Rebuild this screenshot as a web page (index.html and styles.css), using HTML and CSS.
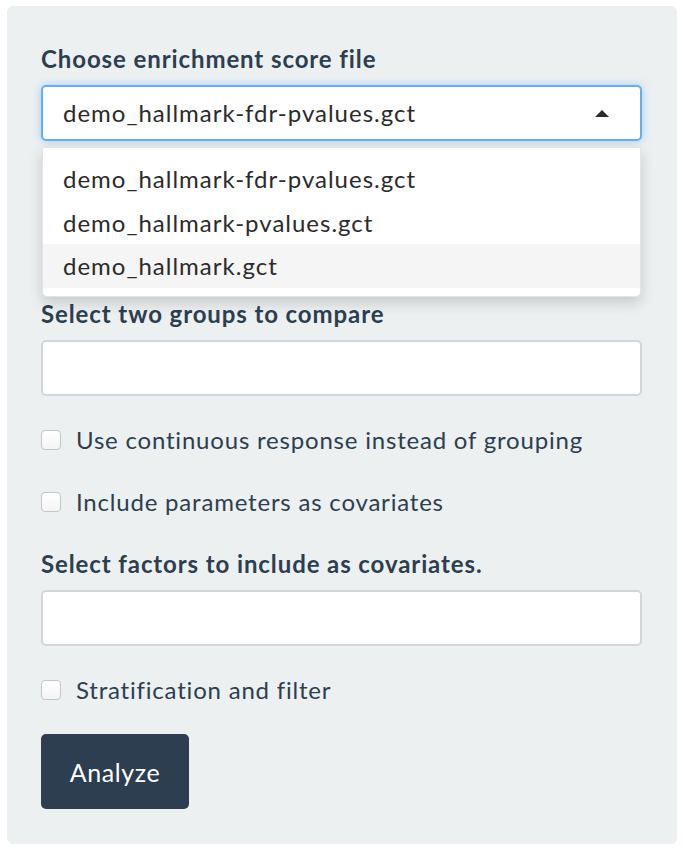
FILE: index.html
```html
<!DOCTYPE html>
<html>
<head>
<meta charset="utf-8">
<link rel="stylesheet" href="styles.css">
</head>
<body>
<div class="well">
  <div class="form-group group-select">
    <label class="control-label">Choose enrichment score file</label>
    <div class="selectize">
      <div class="select-input">
        <span class="select-value">demo_hallmark-fdr-pvalues.gct</span>
        <span class="caret-up"></span>
      </div>
      <div class="dropdown">
        <div class="option">demo_hallmark-fdr-pvalues.gct</div>
        <div class="option">demo_hallmark-pvalues.gct</div>
        <div class="option active">demo_hallmark.gct</div>
      </div>
    </div>
  </div>

  <div class="form-group">
    <label class="control-label">Select two groups to compare</label>
    <div class="text-input"></div>
  </div>

  <label class="checkbox"><input type="checkbox"><span>Use continuous response instead of grouping</span></label>
  <label class="checkbox"><input type="checkbox"><span>Include parameters as covariates</span></label>

  <div class="form-group">
    <label class="control-label">Select factors to include as covariates.</label>
    <div class="text-input"></div>
  </div>

  <label class="checkbox"><input type="checkbox"><span>Stratification and filter</span></label>

  <button class="btn">Analyze</button>
</div>
</body>
</html>
```

FILE: styles.css
```css
* { box-sizing: border-box; }
html, body { margin: 0; padding: 0; background: #ffffff; }
body {
  font-family: Lato, "Open Sans", sans-serif;
  color: #2c3e50;
  font-size: 24px;
  letter-spacing: 0.9px;
}
.well {
  margin: 6px 7px 6px 7px;
  width: 670px;
  background: #ecf0f1;
  border-radius: 6px;
  padding: 37px 35px 35px 34px;
  display: flex;
  flex-direction: column;
  align-items: flex-start;
}
.form-group {
  width: 100%;
  display: flex;
  flex-direction: column;
}
.group-select { margin-bottom: 157px; }
.control-label {
  font-weight: 700;
  font-size: 24px;
  line-height: 32px;
  margin-bottom: 10px;
  color: #2c3e50;
  letter-spacing: 0.9px;
}
.selectize { position: relative; width: 100%; }
.select-input {
  height: 56px;
  border: 2px solid #66afe9;
  border-radius: 5px;
  background: #fff;
  box-shadow: 0 0 8px rgba(102,175,233,0.55);
  display: flex;
  align-items: center;
  justify-content: space-between;
  padding: 0 31px 0 20px;
  color: #2b2b2b;
}
.select-value { font-size: 24px; line-height: 32px; letter-spacing: 1px; }
.caret-up {
  width: 0; height: 0;
  border-left: 7.5px solid transparent;
  border-right: 7.5px solid transparent;
  border-bottom: 7.5px solid #2b2b2b;
}
.dropdown {
  position: absolute;
  left: 1px;
  right: 1px;
  top: 62px;
  background: #fff;
  border: 1px solid #e2e4e6;
  border-radius: 0 0 5px 5px;
  box-shadow: 0 6px 14px rgba(0,0,0,0.16);
  padding: 9px 0 8px;
  z-index: 10;
}
.option {
  height: 43.5px;
  display: flex;
  align-items: center;
  padding-left: 20px;
  color: #2b2b2b;
  font-size: 24px;
  letter-spacing: 1px;
}
.option.active { background: #f5f5f5; }
.text-input {
  height: 56px;
  width: 100%;
  background: #fff;
  border: 2px solid #d3d6d8;
  border-radius: 5px;
}
.checkbox {
  display: flex;
  align-items: center;
  line-height: 32px;
  margin-top: 28px;
  font-size: 24px;
  color: #2c3e50;
  letter-spacing: 0.8px;
}
.checkbox + .checkbox { margin-top: 30px; }
.checkbox + .form-group { margin-top: 30px; }
.checkbox input {
  -webkit-appearance: none;
  appearance: none;
  margin: 0 15px 0 0;
  width: 20px;
  height: 20px;
  border: 1.5px solid #c3c6c8;
  border-radius: 4px;
  background: linear-gradient(#ffffff, #f4f4f4);
}
.btn {
  margin-top: 28px;
  width: 148px;
  height: 75px;
  background: #2c3e50;
  color: #fff;
  border: none;
  border-radius: 5px;
  font-family: Lato, "Open Sans", sans-serif;
  font-size: 25px;
  letter-spacing: 0.6px;
  padding: 0;
}
```
